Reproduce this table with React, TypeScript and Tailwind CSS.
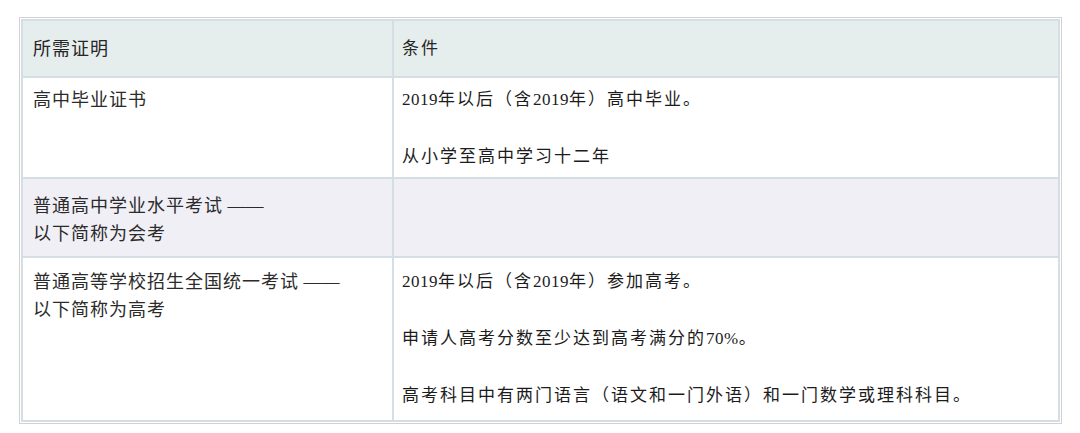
const ROWS = [
  {
    cert: ['高中毕业证书'],
    conds: ['2019年以后（含2019年）高中毕业。', '从小学至高中学习十二年'],
    pad: 'pt-[8px] pb-[6px]',
    shaded: false,
  },
  {
    cert: ['普通高中学业水平考试', '以下简称为会考'],
    conds: [],
    pad: 'pt-[13px] pb-[8px]',
    shaded: true,
  },
  {
    cert: ['普通高等学校招生全国统一考试', '以下简称为高考'],
    conds: [
      '2019年以后（含2019年）参加高考。',
      '申请人高考分数至少达到高考满分的70%。',
      '高考科目中有两门语言（语文和一门外语）和一门数学或理科科目。',
    ],
    pad: 'pt-[10px] pb-[10px]',
    shaded: false,
  },
]

const FONT = "[font-family:'Liberation_Serif','Noto_Sans_CJK_SC',serif]"

// digits sit tighter than the CJK glyphs in the original
function Cond({ text }: { text: string }) {
  const parts = text.split(/(\d+%?)/)
  return (
    <p>
      {parts.map((p, i) =>
        /^\d/.test(p) ? (
          <span key={i} className="tracking-[0.5px]">
            {p}
          </span>
        ) : (
          p
        ),
      )}
    </p>
  )
}

export default function App() {
  return (
    <div className={`w-[1080px] h-[433px] bg-white pt-[17px] pl-[19px] ${FONT}`}>
      <div className="w-[1043px] border border-[#d2d2d2] p-px bg-white">
        <table className="w-full border-collapse table-fixed">
          <colgroup>
            <col className="w-[371px]" />
            <col />
          </colgroup>
          <thead>
            <tr className="bg-[#e6eded] h-[57px]">
              <th className="border-2 border-[#d5dde5] px-[10px] text-left font-normal text-[18px] leading-[28px] tracking-[1px] text-[#262626]">
                所需证明
              </th>
              <th className="border-2 border-[#d5dde5] px-[8px] text-left font-normal text-[17px] leading-[28px] tracking-[2px] text-[#262626]">
                条件
              </th>
            </tr>
          </thead>
          <tbody>
            {ROWS.map((row, i) => (
              <tr key={row.cert[0]} className={row.shaded ? 'bg-[#efeff5]' : 'bg-white'}>
                <td
                  className={`border-2 border-[#d5dde5] align-top px-[10px] text-[18px] leading-[28px] tracking-[1px] text-[#2b2b2b] ${row.pad}`}
                >
                  {row.cert.map((line, j) => (
                    <div key={line}>
                      {line}
                      {i > 0 && j === 0 && <span className="tracking-normal"> ——</span>}
                    </div>
                  ))}
                </td>
                <td
                  className={`border-2 border-[#d5dde5] align-top px-[8px] text-[17px] leading-[28px] tracking-[2px] text-[#1c1c1c] ${row.pad}`}
                >
                  <div className="flex flex-col gap-[29px]">
                    {row.conds.map((c) => (
                      <Cond key={c} text={c} />
                    ))}
                  </div>
                </td>
              </tr>
            ))}
          </tbody>
        </table>
      </div>
    </div>
  )
}
